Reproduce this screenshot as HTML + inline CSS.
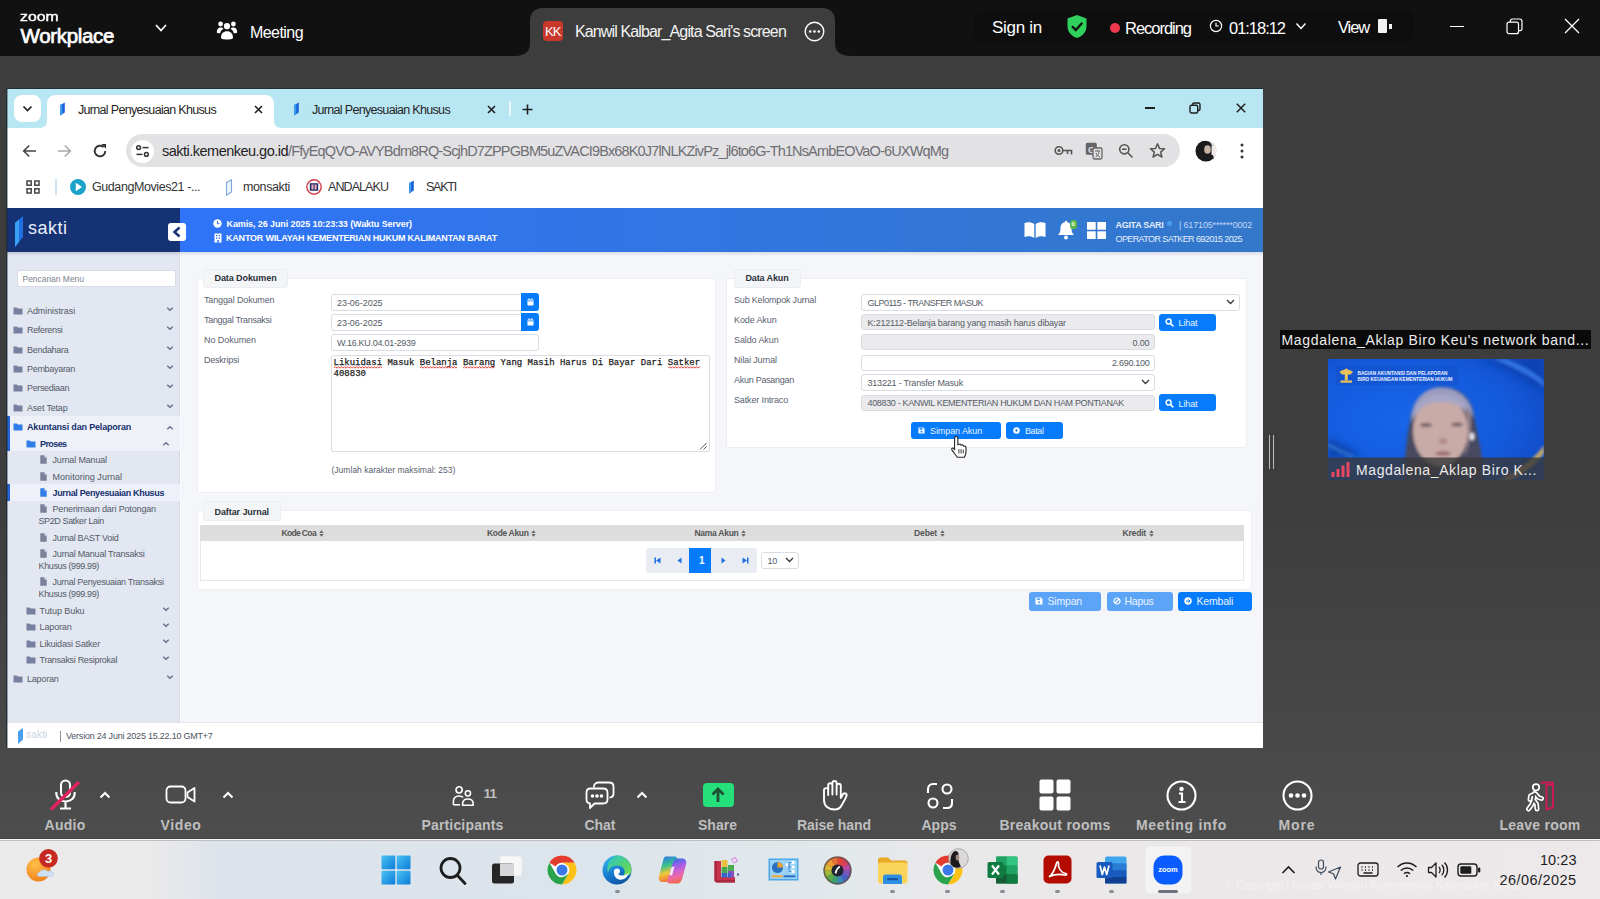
<!DOCTYPE html>
<html><head><meta charset="utf-8"><title>Zoom Meeting</title>
<style>
html,body{margin:0;padding:0;}
body{width:1600px;height:899px;overflow:hidden;position:relative;background:#3d3d3d;font-family:"Liberation Sans",sans-serif;}
.b{position:absolute;display:block;}
.t{position:absolute;white-space:nowrap;display:block;}
.m{font-family:"Liberation Mono",monospace;}
</style></head><body>
<div class="b" style="left:0;top:0;width:1600px;height:899px;background:linear-gradient(#3d3d3d 0,#3d3d3d 500px,#4d4d4d 838px,#4d4d4d 100%)"></div>
<div class="b" style="left:0px;top:0px;width:1600px;height:56px;background:#111111;"></div>
<div class="b" style="left:974px;top:11px;width:440px;height:31px;background:#0e0e0e;border-radius:9px;"></div>
<span class="t" style="left:20.0px;top:9.8px;font-size:12.5px;line-height:15px;color:#fff;-webkit-text-stroke:0.400px #fff;transform:scaleX(1.260);transform-origin:0 50%;">zoom</span>
<span class="t" style="left:20.5px;top:22.5px;font-size:20.5px;line-height:25px;color:#fff;letter-spacing:-0.33px;-webkit-text-stroke:0.700px #fff;">Workplace</span>
<svg class="b" style="left:154px;top:23px" width="14" height="10" viewBox="0 0 14 10"><path d="M2 2 L7 7.5 L12 2" fill="none" stroke="#fff" stroke-width="1.7"/></svg>
<svg class="b" style="left:216px;top:19px" width="22" height="22" viewBox="0 0 22 22" fill="#fff">
<circle cx="11" cy="7.2" r="3.1"/><circle cx="4.6" cy="5" r="2.4"/><circle cx="17.4" cy="5" r="2.4"/>
<path d="M5 18.5c0-4 2.3-6.3 6-6.3s6 2.3 6 6.3c0 1.2-1.5 2-6 2s-6-.8-6-2z"/>
<path d="M0.8 13.2c0-3 1.5-4.8 3.8-4.8 1.3 0 2.2.5 2.9 1.3-1.6.8-2.8 2.3-3.3 4.6-2.3-.1-3.4-.4-3.4-1.100z"/>
<path d="M21.200 13.200c0-3-1.500-4.800-3.800-4.800-1.300 0-2.200.5-2.900 1.300 1.600.8 2.800 2.300 3.300 4.600 2.300-.1 3.400-.4 3.400-1.100z"/></svg>
<span class="t" style="left:250.0px;top:22.5px;font-size:16px;line-height:19px;color:#fff;letter-spacing:-0.56px;">Meeting</span>
<svg class="b" style="left:512px;top:8px" width="342" height="48" viewBox="0 0 342 47" preserveAspectRatio="none"><path d="M0 47 C12 47 18 44 18 34 L18 12 C18 5 23 0 30 0 L311 0 C318 0 323 5 323 12 L323 34 C323 44 329 47 342 47 Z" fill="#3d3d3d"/></svg>
<div class="b" style="left:542.5px;top:21px;width:20px;height:20px;background:#c8382c;border-radius:4px;"></div>
<span class="t" style="left:545.0px;top:23.5px;font-size:13px;line-height:16px;color:#fff;letter-spacing:-0.92px;">KK</span>
<span class="t" style="left:575.0px;top:22.0px;font-size:16px;line-height:19px;color:#f2f2f2;letter-spacing:-0.87px;">Kanwil Kalbar_Agita Sari's screen</span>
<svg class="b" style="left:804px;top:21px" width="21" height="21" viewBox="0 0 21 21"><circle cx="10.500" cy="10.500" r="9.300" fill="none" stroke="#fff" stroke-width="1.400"/><circle cx="6.200" cy="10.500" r="1.300" fill="#fff"/><circle cx="10.500" cy="10.500" r="1.300" fill="#fff"/><circle cx="14.800" cy="10.500" r="1.300" fill="#fff"/></svg>
<span class="t" style="left:992.0px;top:18.0px;font-size:17px;line-height:20px;color:#fff;letter-spacing:-0.28px;">Sign in</span>
<svg class="b" style="left:1066px;top:14px" width="22" height="25" viewBox="0 0 22 25"><path d="M11 1 L20.500 4.500 V12 C20.500 18 16.500 22 11 24 C5.500 22 1.500 18 1.500 12 V4.500 Z" fill="#2fd05b"/><path d="M6 12.200 L9.800 16 L16.300 8.800" fill="none" stroke="#111111" stroke-width="2.300"/></svg>
<div class="b" style="left:1109.5px;top:22.5px;width:10px;height:10px;background:#f0384d;border-radius:50%;"></div>
<span class="t" style="left:1125.0px;top:18.0px;font-size:16.5px;line-height:20px;color:#fff;letter-spacing:-1.02px;">Recording</span>
<svg class="b" style="left:1209px;top:19px" width="14" height="14" viewBox="0 0 14 14"><circle cx="7" cy="7" r="5.600" fill="none" stroke="#fff" stroke-width="1.200"/><path d="M7 3.800 V7 H9.800" fill="none" stroke="#fff" stroke-width="1.200"/></svg>
<span class="t" style="left:1229.0px;top:18.0px;font-size:16.5px;line-height:20px;color:#fff;letter-spacing:-1.03px;">01:18:12</span>
<svg class="b" style="left:1295px;top:22px" width="12" height="9" viewBox="0 0 12 9"><path d="M1.500 1.500 L6 6.500 L10.500 1.500" fill="none" stroke="#fff" stroke-width="1.500"/></svg>
<span class="t" style="left:1338.0px;top:17.0px;font-size:16.5px;line-height:20px;color:#fff;letter-spacing:-1.12px;">View</span>
<div class="b" style="left:1378px;top:19px;width:9px;height:14px;background:#f2f2f2;border-radius:1px;"></div>
<div class="b" style="left:1388.5px;top:23.5px;width:3.5px;height:5px;background:#f2f2f2;"></div>
<div class="b" style="left:1450px;top:26px;width:14px;height:1.4px;background:#fff;"></div>
<svg class="b" style="left:1506px;top:18px" width="17" height="17" viewBox="0 0 17 17" fill="none" stroke="#fff" stroke-width="1.200"><rect x="1" y="4.200" width="11.500" height="11.500" rx="2"/><path d="M4.300 4 V3.200 C4.300 1.900 5.200 1 6.500 1 H13.500 C14.900 1 16 2.100 16 3.500 V10.500 C16 11.800 15.200 12.600 14 12.600 H13"/></svg>
<svg class="b" style="left:1564px;top:18px" width="16" height="16" viewBox="0 0 16 16"><path d="M1 1 L15 15 M15 1 L1 15" stroke="#fff" stroke-width="1.300"/></svg>
<div class="b" style="left:6px;top:88px;width:1257px;height:660px;background:rgba(30,44,50,0.850);"></div>
<div class="b" style="left:7px;top:89px;width:1256px;height:659px;background:#fff;"></div>
<div class="b" style="left:7px;top:89px;width:1256px;height:39px;background:#b9e6f3;"></div>
<div class="b" style="left:14px;top:95px;width:27px;height:27px;background:#fff;border-radius:8px;"></div>
<svg class="b" style="left:22px;top:105px" width="11" height="8" viewBox="0 0 11 8"><path d="M1.500 1.500 L5.500 5.500 L9.500 1.500" fill="none" stroke="#1f1f1f" stroke-width="1.700"/></svg>
<svg class="b" style="left:39px;top:95px" width="243" height="33" viewBox="0 0 243 33"><path d="M0 33 C6 33 8 30 8 25 L8 9 C8 3 12 0 17 0 L226 0 C231 0 235 3 235 9 L235 25 C235 30 237 33 243 33 Z" fill="#fff"/></svg>
<svg class="b" style="left:57.5px;top:102px" width="9" height="14" viewBox="0 0 9 14"><path d="M2.200 3 L6.800 0.500 L6.800 10.500 L2.200 13.500 Z" fill="#1d63d8"/><path d="M2.200 3 L4.200 2 L4.200 12.200 L2.200 13.500 Z" fill="#3b9bf0"/></svg>
<span class="t" style="left:78.0px;top:102.5px;font-size:12.5px;line-height:15px;color:#1f1f1f;letter-spacing:-0.68px;">Jurnal Penyesuaian Khusus</span>
<svg class="b" style="left:254px;top:104.500px" width="9" height="9" viewBox="0 0 9 9"><path d="M1 1 L8 8 M8 1 L1 8" stroke="#1f1f1f" stroke-width="1.600"/></svg>
<svg class="b" style="left:291.5px;top:102px" width="9" height="14" viewBox="0 0 9 14"><path d="M2.200 3 L6.800 0.500 L6.800 10.500 L2.200 13.500 Z" fill="#1d63d8"/><path d="M2.200 3 L4.200 2 L4.200 12.200 L2.200 13.500 Z" fill="#3b9bf0"/></svg>
<span class="t" style="left:312.0px;top:102.5px;font-size:12.5px;line-height:15px;color:#1f1f1f;letter-spacing:-0.68px;">Jurnal Penyesuaian Khusus</span>
<svg class="b" style="left:487px;top:104.500px" width="9" height="9" viewBox="0 0 9 9"><path d="M1 1 L8 8 M8 1 L1 8" stroke="#1f1f1f" stroke-width="1.600"/></svg>
<div class="b" style="left:509px;top:101px;width:2px;height:15px;background:#eef8fc;border-radius:1px;"></div>
<svg class="b" style="left:522px;top:103.500px" width="11" height="11" viewBox="0 0 11 11"><path d="M5.500 0.500 V10.500 M0.500 5.500 H10.500" stroke="#1f1f1f" stroke-width="1.600"/></svg>
<div class="b" style="left:1145px;top:107.3px;width:10px;height:1.4px;background:#1f1f1f;"></div>
<svg class="b" style="left:1189px;top:102px" width="12" height="12" viewBox="0 0 12 12" fill="none" stroke="#1f1f1f" stroke-width="1.400"><rect x="1" y="3.300" width="7.700" height="7.700" rx="1.500"/><path d="M3.500 3 V2.500 C3.500 1.600 4.100 1 5 1 H9.500 C10.400 1 11 1.600 11 2.500 V7 C11 7.900 10.400 8.500 9.500 8.500 H9"/></svg>
<svg class="b" style="left:1236px;top:103px" width="10" height="10" viewBox="0 0 10 10"><path d="M0.800 0.800 L9.200 9.200 M9.200 0.800 L0.800 9.200" stroke="#1f1f1f" stroke-width="1.500"/></svg>
<div class="b" style="left:7px;top:128px;width:1256px;height:80px;background:#fff;border-radius:7px 7px 0 0;"></div>
<svg class="b" style="left:22px;top:144px" width="15" height="14" viewBox="0 0 15 14"><path d="M14 7 H2 M7.200 1.500 L1.700 7 L7.200 12.500" fill="none" stroke="#444" stroke-width="1.600"/></svg>
<svg class="b" style="left:57px;top:144px" width="15" height="14" viewBox="0 0 15 14"><path d="M1 7 H13 M7.800 1.500 L13.300 7 L7.800 12.500" fill="none" stroke="#a9a9a9" stroke-width="1.600"/></svg>
<svg class="b" style="left:92px;top:143px" width="16" height="16" viewBox="0 0 16 16"><path d="M13.300 8 A5.300 5.300 0 1 1 11.600 4.100" fill="none" stroke="#333" stroke-width="1.900"/><path d="M9.300 1 H14 V5.700 Z" fill="#333"/></svg>
<div class="b" style="left:126px;top:134px;width:1054px;height:33px;background:#e2e1e4;border-radius:16.500px;"></div>
<div class="b" style="left:131px;top:139.5px;width:23px;height:23px;background:#fff;border-radius:50%;"></div>
<svg class="b" style="left:135px;top:144px" width="15" height="14" viewBox="0 0 15 14" fill="none" stroke="#333" stroke-width="1.500"><circle cx="3.600" cy="3.600" r="1.900"/><path d="M7.500 3.600 H13.500"/><circle cx="11.400" cy="10.400" r="1.900"/><path d="M1.500 10.400 H7.500"/></svg>
<span class="t" style="left:162.0px;top:142.5px;font-size:14.5px;line-height:17px;color:#1f1f1f;letter-spacing:-0.51px;">sakti.kemenkeu.go.id</span>
<span class="t" style="left:288.0px;top:142.5px;font-size:14.5px;line-height:17px;color:#6e6e73;letter-spacing:-0.85px;">/FfyEqQVO-AVYBdm8RQ-ScjhD7ZPPGBM5uZVACI9Bx68K0J7lNLKZivPz_jl6to6G-Th1NsAmbEOVaO-6UXWqMg</span>
<svg class="b" style="left:1054px;top:145px" width="19" height="12" viewBox="0 0 19 12" fill="none" stroke="#555" stroke-width="1.600"><circle cx="5" cy="5.500" r="3.800"/><circle cx="5" cy="5.500" r="0.800" fill="#555"/><path d="M8.800 5.500 H17.500 V9.500 M13.500 5.500 V9"/></svg>
<svg class="b" style="left:1085px;top:142px" width="18" height="18" viewBox="0 0 18 18"><rect x="0.800" y="0.800" width="11" height="12" rx="1.500" fill="#666"/><text x="3" y="10.500" font-family="Liberation Sans" font-size="9" font-weight="700" fill="#e2e1e4">G</text><rect x="8" y="6" width="9" height="11" rx="1.500" fill="#e2e1e4" stroke="#666" stroke-width="1.300"/><path d="M10 9 H15 M12.500 8 V9 M10.500 15 C13 13.500 14 11.500 14.200 9 M11 11 C11.800 13 13 14.200 15 15" stroke="#666" stroke-width="1" fill="none"/></svg>
<svg class="b" style="left:1118px;top:143px" width="16" height="16" viewBox="0 0 16 16" fill="none" stroke="#555" stroke-width="1.600"><circle cx="6.300" cy="6.300" r="4.600"/><path d="M9.800 9.800 L14.500 14.500 M4 6.300 H8.600"/></svg>
<svg class="b" style="left:1149px;top:142px" width="17" height="17" viewBox="0 0 17 17"><path d="M8.500 1.800 L10.500 6.400 L15.500 6.800 L11.700 10.100 L12.900 15 L8.500 12.400 L4.100 15 L5.300 10.100 L1.500 6.800 L6.500 6.400 Z" fill="none" stroke="#555" stroke-width="1.500" stroke-linejoin="round"/></svg>
<svg class="b" style="left:1195px;top:140px" width="22" height="22" viewBox="0 0 22 22"><defs><clipPath id="pc"><circle cx="11" cy="11" r="10.500"/></clipPath></defs><g clip-path="url(#pc)"><rect width="22" height="22" fill="#d8d4d0"/><path d="M0 22 V8 C1 2 6 0 11 1 C16 1 18 6 17 11 C17 15 19 19 22 22 Z" fill="#1b1b1d"/><ellipse cx="12.500" cy="9.500" rx="3.300" ry="4.300" fill="#c9b4a8"/><rect x="16.500" y="6" width="5.500" height="9" fill="#efeceb"/></g></svg>
<svg class="b" style="left:1239px;top:142px" width="6" height="18" viewBox="0 0 6 18" fill="#333"><circle cx="3" cy="3" r="1.500"/><circle cx="3" cy="9" r="1.500"/><circle cx="3" cy="15" r="1.500"/></svg>
<svg class="b" style="left:26px;top:180px" width="14" height="14" viewBox="0 0 14 14" fill="none" stroke="#444" stroke-width="1.500"><rect x="1" y="1" width="4.200" height="4.200"/><rect x="8.800" y="1" width="4.200" height="4.200"/><rect x="1" y="8.800" width="4.200" height="4.200"/><rect x="8.800" y="8.800" width="4.200" height="4.200"/></svg>
<div class="b" style="left:55px;top:179px;width:1.5px;height:16px;background:#cfe6f0;"></div>
<svg class="b" style="left:70px;top:179px" width="16" height="16" viewBox="0 0 16 16"><circle cx="8" cy="8" r="8" fill="#1ba3c9"/><path d="M5.800 3.800 L12 8 L5.800 12.200 Z" fill="#fff"/></svg>
<span class="t" style="left:92.0px;top:179.5px;font-size:12.5px;line-height:15px;color:#333;letter-spacing:-0.42px;">GudangMovies21 -...</span>
<svg class="b" style="left:225px;top:178.500px" width="8" height="17" viewBox="0 0 8 17"><path d="M1.500 3.500 L6.500 0.800 L6.500 13 L1.500 16.200 Z" fill="#eef5fc" stroke="#7ea6dc" stroke-width="1.100"/></svg>
<span class="t" style="left:243.0px;top:179.5px;font-size:12.5px;line-height:15px;color:#333;letter-spacing:-0.38px;">monsakti</span>
<svg class="b" style="left:306px;top:179px" width="16" height="16" viewBox="0 0 16 16"><circle cx="8" cy="8" r="7.200" fill="#fff" stroke="#d23a4a" stroke-width="1.400"/><rect x="3.800" y="4.200" width="8.400" height="7.600" fill="#2a2f6b"/><rect x="5.500" y="5.500" width="2" height="5" fill="#e9b3b8"/><rect x="8.600" y="5.500" width="2" height="5" fill="#e9b3b8"/></svg>
<span class="t" style="left:328.0px;top:179.5px;font-size:12.5px;line-height:15px;color:#333;letter-spacing:-0.92px;">ANDALAKU</span>
<svg class="b" style="left:407px;top:180px" width="9" height="14" viewBox="0 0 9 14"><path d="M2.200 3 L6.800 0.500 L6.800 10.500 L2.200 13.500 Z" fill="#1d63d8"/><path d="M2.200 3 L4.200 2 L4.200 12.200 L2.200 13.500 Z" fill="#3b9bf0"/></svg>
<span class="t" style="left:426.0px;top:179.5px;font-size:12.5px;line-height:15px;color:#333;letter-spacing:-1.22px;">SAKTI</span>
<div class="b" style="left:7px;top:208px;width:1256px;height:44px;background:linear-gradient(90deg,#2f74f8 13.700%,#3378c9 100%);"></div>
<div class="b" style="left:7px;top:208px;width:173px;height:44px;background:#143274;"></div>
<svg class="b" style="left:13px;top:215px" width="12" height="33" viewBox="0 0 12 33"><path d="M2 8 L10 1 L10 22 L2 32 Z" fill="#1f6fe0"/><path d="M2 8 L6 4.500 L6 27 L2 32 Z" fill="#39a0f5"/></svg>
<span class="t" style="left:28.0px;top:217.0px;font-size:18px;line-height:22px;color:#e9eefb;letter-spacing:0.50px;">sakti</span>
<div class="b" style="left:168px;top:223px;width:18px;height:18px;background:#fff;border-radius:3px;"></div>
<svg class="b" style="left:172px;top:226px" width="10" height="12" viewBox="0 0 10 12"><path d="M7.500 1.500 L2.500 6 L7.500 10.500" fill="none" stroke="#142f74" stroke-width="2.400"/></svg>
<svg class="b" style="left:213px;top:219px" width="9" height="9" viewBox="0 0 9 9"><circle cx="4.500" cy="4.500" r="4.200" fill="#fff"/><path d="M4.500 2 V4.700 H6.500" stroke="#2c71e2" stroke-width="1" fill="none"/></svg>
<span class="t" style="left:226.5px;top:218.5px;font-size:9px;line-height:11px;color:#fff;font-weight:700;letter-spacing:-0.10px;">Kamis, 26 Juni 2025 10:23:33 (Waktu Server)</span>
<svg class="b" style="left:213.500px;top:233px" width="8" height="10" viewBox="0 0 8 10"><rect x="0.500" y="0.500" width="7" height="9" fill="#fff"/><rect x="2" y="2" width="1.300" height="1.300" fill="#2c71e2"/><rect x="4.700" y="2" width="1.300" height="1.300" fill="#2c71e2"/><rect x="2" y="4.500" width="1.300" height="1.300" fill="#2c71e2"/><rect x="4.700" y="4.500" width="1.300" height="1.300" fill="#2c71e2"/><rect x="3.200" y="7" width="1.600" height="2.500" fill="#2c71e2"/></svg>
<span class="t" style="left:226.0px;top:233.0px;font-size:9px;line-height:11px;color:#fff;font-weight:700;letter-spacing:-0.20px;">KANTOR WILAYAH KEMENTERIAN HUKUM KALIMANTAN BARAT</span>
<svg class="b" style="left:1024px;top:221px" width="22" height="18" viewBox="0 0 22 18"><path d="M0.500 2 C4 0.500 7.500 1 10.300 3 V17 C7.500 15 4 14.500 0.500 16 Z M21.500 2 C18 0.500 14.500 1 11.700 3 V17 C14.500 15 18 14.500 21.500 16 Z" fill="#fff"/></svg>
<svg class="b" style="left:1057px;top:220px" width="18" height="21" viewBox="0 0 18 21"><path d="M9 2 C5 2 3.500 5 3.500 8.500 C3.500 12 2.500 13.500 1 15 H17 C15.500 13.500 14.500 12 14.500 8.500 C14.500 5 13 2 9 2 Z" fill="#fff"/><circle cx="9" cy="17.500" r="2" fill="#fff"/><circle cx="9" cy="2" r="1.200" fill="#fff"/></svg>
<div class="b" style="left:1069.5px;top:220px;width:7px;height:9px;background:#58b947;border-radius:3px;"></div>
<span class="t" style="left:1071.5px;top:221.0px;font-size:6px;line-height:7px;color:#fff;font-weight:700;">0</span>
<svg class="b" style="left:1087px;top:222px" width="19" height="17" viewBox="0 0 19 17" fill="#fff"><rect x="0" y="0" width="8.700" height="7.700"/><rect x="10.300" y="0" width="8.700" height="7.700"/><rect x="0" y="9.300" width="8.700" height="7.700"/><rect x="10.300" y="9.300" width="8.700" height="7.700"/></svg>
<span class="t" style="left:1115.5px;top:219.5px;font-size:9px;line-height:11px;color:#e3edfd;font-weight:700;letter-spacing:-0.30px;">AGITA SARI</span>
<div class="b" style="left:1167px;top:221px;width:5px;height:5px;background:#4a9cf5;border-radius:50%;"></div>
<span class="t" style="left:1179.0px;top:219.5px;font-size:9px;line-height:11px;color:#c3d6f7;letter-spacing:-0.16px;">| 617105******0002</span>
<span class="t" style="left:1115.5px;top:234.0px;font-size:9px;line-height:11px;color:#e3edfd;letter-spacing:-0.60px;">OPERATOR SATKER 692015 2025</span>
<div class="b" style="left:180px;top:252px;width:1083px;height:470px;background:#f5f6f9;"></div>
<div class="b" style="left:180px;top:252px;width:1083px;height:4px;background:linear-gradient(#d6dbe6,#f5f6f9);"></div>
<div class="b" style="left:7px;top:252px;width:173px;height:470px;background:#e2e7f1;"></div>
<div class="b" style="left:7px;top:252px;width:173px;height:4px;background:linear-gradient(#c2c8d8,#e2e7f1);"></div>
<div class="b" style="left:179px;top:252px;width:1px;height:470px;background:#d5d8de;"></div>
<div class="b" style="left:180px;top:256px;width:1px;height:466px;background:#f9fbfe;"></div>
<div class="b" style="left:17.3px;top:269.5px;width:158.4px;height:17.8px;background:#fff;border:1px solid #d8dce6;border-radius:2px;box-sizing:border-box;"></div>
<span class="t" style="left:22.5px;top:274.3px;font-size:8.5px;line-height:10px;color:#7d828d;letter-spacing:-0.03px;">Pencarian Menu</span>
<svg class="b" style="left:13px;top:307.2px" width="10" height="8" viewBox="0 0 10 8"><path d="M0.500 0.500 H3.800 L4.800 1.600 H9.500 V7.500 H0.500 Z" fill="#7880a0"/></svg>
<span class="t" style="left:27.0px;top:306.2px;font-size:9px;line-height:11px;color:#545a68;letter-spacing:-0.08px;">Administrasi</span>
<svg class="b" style="left:165.5px;top:305.9px" width="8" height="6" viewBox="0 0 8 6"><path d="M1.200 1.700 L4 4.300 L6.800 1.700" fill="none" stroke="#6b728c" stroke-width="1.500"/></svg>
<svg class="b" style="left:13px;top:326.4px" width="10" height="8" viewBox="0 0 10 8"><path d="M0.500 0.500 H3.800 L4.800 1.600 H9.500 V7.500 H0.500 Z" fill="#7880a0"/></svg>
<span class="t" style="left:27.0px;top:325.4px;font-size:9px;line-height:11px;color:#545a68;letter-spacing:-0.34px;">Referensi</span>
<svg class="b" style="left:165.5px;top:325.1px" width="8" height="6" viewBox="0 0 8 6"><path d="M1.200 1.700 L4 4.300 L6.800 1.700" fill="none" stroke="#6b728c" stroke-width="1.500"/></svg>
<svg class="b" style="left:13px;top:345.9px" width="10" height="8" viewBox="0 0 10 8"><path d="M0.500 0.500 H3.800 L4.800 1.600 H9.500 V7.500 H0.500 Z" fill="#7880a0"/></svg>
<span class="t" style="left:27.0px;top:344.9px;font-size:9px;line-height:11px;color:#545a68;letter-spacing:-0.28px;">Bendahara</span>
<svg class="b" style="left:165.5px;top:344.6px" width="8" height="6" viewBox="0 0 8 6"><path d="M1.200 1.700 L4 4.300 L6.800 1.700" fill="none" stroke="#6b728c" stroke-width="1.500"/></svg>
<svg class="b" style="left:13px;top:365.4px" width="10" height="8" viewBox="0 0 10 8"><path d="M0.500 0.500 H3.800 L4.800 1.600 H9.500 V7.500 H0.500 Z" fill="#7880a0"/></svg>
<span class="t" style="left:27.0px;top:364.4px;font-size:9px;line-height:11px;color:#545a68;letter-spacing:-0.30px;">Pembayaran</span>
<svg class="b" style="left:165.5px;top:364.1px" width="8" height="6" viewBox="0 0 8 6"><path d="M1.200 1.700 L4 4.300 L6.800 1.700" fill="none" stroke="#6b728c" stroke-width="1.500"/></svg>
<svg class="b" style="left:13px;top:384.4px" width="10" height="8" viewBox="0 0 10 8"><path d="M0.500 0.500 H3.800 L4.800 1.600 H9.500 V7.500 H0.500 Z" fill="#7880a0"/></svg>
<span class="t" style="left:27.0px;top:383.4px;font-size:9px;line-height:11px;color:#545a68;letter-spacing:-0.35px;">Persediaan</span>
<svg class="b" style="left:165.5px;top:383.1px" width="8" height="6" viewBox="0 0 8 6"><path d="M1.200 1.700 L4 4.300 L6.800 1.700" fill="none" stroke="#6b728c" stroke-width="1.500"/></svg>
<svg class="b" style="left:13px;top:403.9px" width="10" height="8" viewBox="0 0 10 8"><path d="M0.500 0.500 H3.800 L4.800 1.600 H9.500 V7.500 H0.500 Z" fill="#7880a0"/></svg>
<span class="t" style="left:27.0px;top:402.9px;font-size:9px;line-height:11px;color:#545a68;letter-spacing:-0.19px;">Aset Tetap</span>
<svg class="b" style="left:165.5px;top:402.6px" width="8" height="6" viewBox="0 0 8 6"><path d="M1.200 1.700 L4 4.300 L6.800 1.700" fill="none" stroke="#6b728c" stroke-width="1.500"/></svg>
<div class="b" style="left:7px;top:415.5px;width:173px;height:35px;background:#eef1f8;"></div>
<div class="b" style="left:7px;top:415.5px;width:2.5px;height:35px;background:#2563d6;"></div>
<svg class="b" style="left:13px;top:422.8px" width="10" height="8" viewBox="0 0 10 8"><path d="M0.500 0.500 H3.800 L4.800 1.600 H9.500 V7.500 H0.500 Z" fill="#2f7de6"/></svg>
<span class="t" style="left:27.0px;top:422.2px;font-size:9px;line-height:11px;color:#16306e;font-weight:700;letter-spacing:-0.17px;">Akuntansi dan Pelaporan</span>
<svg class="b" style="left:165.5px;top:424.8px" width="8" height="6" viewBox="0 0 8 6"><path d="M1.200 4.300 L4 1.700 L6.800 4.300" fill="none" stroke="#6b728c" stroke-width="1.500"/></svg>
<svg class="b" style="left:26px;top:439.8px" width="10" height="8" viewBox="0 0 10 8"><path d="M0.500 0.500 H3.800 L4.800 1.600 H9.500 V7.500 H0.500 Z" fill="#2f7de6"/></svg>
<span class="t" style="left:40.0px;top:438.9px;font-size:9px;line-height:11px;color:#16306e;font-weight:700;letter-spacing:-0.59px;">Proses</span>
<svg class="b" style="left:162px;top:441.3px" width="8" height="6" viewBox="0 0 8 6"><path d="M1.200 4.300 L4 1.700 L6.800 4.300" fill="none" stroke="#6b728c" stroke-width="1.500"/></svg>
<svg class="b" style="left:39.8px;top:455.4px" width="7" height="9" viewBox="0 0 7 9"><path d="M0.300 0.300 H4.300 L6.700 2.700 V8.700 H0.300 Z" fill="#7a8198"/><path d="M4.300 0.300 V2.700 H6.700" fill="#c9cede"/></svg>
<span class="t" style="left:52.5px;top:455.2px;font-size:9px;line-height:11px;color:#545a68;letter-spacing:-0.16px;">Jurnal Manual</span>
<svg class="b" style="left:39.8px;top:471.9px" width="7" height="9" viewBox="0 0 7 9"><path d="M0.300 0.300 H4.300 L6.700 2.700 V8.700 H0.300 Z" fill="#7a8198"/><path d="M4.300 0.300 V2.700 H6.700" fill="#c9cede"/></svg>
<span class="t" style="left:52.5px;top:471.7px;font-size:9px;line-height:11px;color:#545a68;letter-spacing:0.03px;">Monitoring Jurnal</span>
<div class="b" style="left:7px;top:484px;width:173px;height:16.5px;background:#eef1f8;"></div>
<div class="b" style="left:7px;top:484px;width:2.5px;height:16.5px;background:#2563d6;"></div>
<svg class="b" style="left:39.8px;top:488.4px" width="7" height="9" viewBox="0 0 7 9"><path d="M0.300 0.300 H4.300 L6.700 2.700 V8.700 H0.300 Z" fill="#2f7de6"/><path d="M4.300 0.300 V2.700 H6.700" fill="#c9cede"/></svg>
<span class="t" style="left:52.5px;top:488.2px;font-size:9px;line-height:11px;color:#16306e;font-weight:700;letter-spacing:-0.34px;">Jurnal Penyesuaian Khusus</span>
<svg class="b" style="left:39.8px;top:504.4px" width="7" height="9" viewBox="0 0 7 9"><path d="M0.300 0.300 H4.300 L6.700 2.700 V8.700 H0.300 Z" fill="#7a8198"/><path d="M4.300 0.300 V2.700 H6.700" fill="#c9cede"/></svg>
<span class="t" style="left:52.5px;top:504.4px;font-size:9px;line-height:11px;color:#545a68;letter-spacing:-0.15px;">Penerimaan dari Potongan</span>
<span class="t" style="left:38.5px;top:516.4px;font-size:9px;line-height:11px;color:#545a68;letter-spacing:-0.38px;">SP2D Satker Lain</span>
<svg class="b" style="left:39.8px;top:532.9px" width="7" height="9" viewBox="0 0 7 9"><path d="M0.300 0.300 H4.300 L6.700 2.700 V8.700 H0.300 Z" fill="#7a8198"/><path d="M4.300 0.300 V2.700 H6.700" fill="#c9cede"/></svg>
<span class="t" style="left:52.5px;top:532.7px;font-size:9px;line-height:11px;color:#545a68;letter-spacing:-0.27px;">Jurnal BAST Void</span>
<svg class="b" style="left:39.8px;top:549.4px" width="7" height="9" viewBox="0 0 7 9"><path d="M0.300 0.300 H4.300 L6.700 2.700 V8.700 H0.300 Z" fill="#7a8198"/><path d="M4.300 0.300 V2.700 H6.700" fill="#c9cede"/></svg>
<span class="t" style="left:52.5px;top:549.0px;font-size:9px;line-height:11px;color:#545a68;letter-spacing:-0.24px;">Jurnal Manual Transaksi</span>
<span class="t" style="left:38.5px;top:561.2px;font-size:9px;line-height:11px;color:#545a68;letter-spacing:-0.37px;">Khusus (999.99)</span>
<svg class="b" style="left:39.8px;top:577.4px" width="7" height="9" viewBox="0 0 7 9"><path d="M0.300 0.300 H4.300 L6.700 2.700 V8.700 H0.300 Z" fill="#7a8198"/><path d="M4.300 0.300 V2.700 H6.700" fill="#c9cede"/></svg>
<span class="t" style="left:52.5px;top:577.2px;font-size:9px;line-height:11px;color:#545a68;letter-spacing:-0.32px;">Jurnal Penyesuaian Transaksi</span>
<span class="t" style="left:38.5px;top:589.4px;font-size:9px;line-height:11px;color:#545a68;letter-spacing:-0.37px;">Khusus (999.99)</span>
<svg class="b" style="left:26px;top:606.8px" width="10" height="8" viewBox="0 0 10 8"><path d="M0.500 0.500 H3.800 L4.800 1.600 H9.500 V7.500 H0.500 Z" fill="#7880a0"/></svg>
<span class="t" style="left:39.6px;top:605.8px;font-size:9px;line-height:11px;color:#545a68;letter-spacing:-0.08px;">Tutup Buku</span>
<svg class="b" style="left:162px;top:605.6px" width="8" height="6" viewBox="0 0 8 6"><path d="M1.200 1.700 L4 4.300 L6.800 1.700" fill="none" stroke="#6b728c" stroke-width="1.500"/></svg>
<svg class="b" style="left:26px;top:623.2px" width="10" height="8" viewBox="0 0 10 8"><path d="M0.500 0.500 H3.800 L4.800 1.600 H9.500 V7.500 H0.500 Z" fill="#7880a0"/></svg>
<span class="t" style="left:39.6px;top:622.2px;font-size:9px;line-height:11px;color:#545a68;letter-spacing:-0.16px;">Laporan</span>
<svg class="b" style="left:162px;top:622px" width="8" height="6" viewBox="0 0 8 6"><path d="M1.200 1.700 L4 4.300 L6.800 1.700" fill="none" stroke="#6b728c" stroke-width="1.500"/></svg>
<svg class="b" style="left:26px;top:639.6px" width="10" height="8" viewBox="0 0 10 8"><path d="M0.500 0.500 H3.800 L4.800 1.600 H9.500 V7.500 H0.500 Z" fill="#7880a0"/></svg>
<span class="t" style="left:39.6px;top:638.6px;font-size:9px;line-height:11px;color:#545a68;letter-spacing:-0.20px;">Likuidasi Satker</span>
<svg class="b" style="left:162px;top:638.4px" width="8" height="6" viewBox="0 0 8 6"><path d="M1.200 1.700 L4 4.300 L6.800 1.700" fill="none" stroke="#6b728c" stroke-width="1.500"/></svg>
<svg class="b" style="left:26px;top:655.7px" width="10" height="8" viewBox="0 0 10 8"><path d="M0.500 0.500 H3.800 L4.800 1.600 H9.500 V7.500 H0.500 Z" fill="#7880a0"/></svg>
<span class="t" style="left:39.6px;top:654.7px;font-size:9px;line-height:11px;color:#545a68;letter-spacing:-0.31px;">Transaksi Resiprokal</span>
<svg class="b" style="left:162px;top:654.5px" width="8" height="6" viewBox="0 0 8 6"><path d="M1.200 1.700 L4 4.300 L6.800 1.700" fill="none" stroke="#6b728c" stroke-width="1.500"/></svg>
<svg class="b" style="left:13px;top:675.3px" width="10" height="8" viewBox="0 0 10 8"><path d="M0.500 0.500 H3.800 L4.800 1.600 H9.500 V7.500 H0.500 Z" fill="#7880a0"/></svg>
<span class="t" style="left:27.0px;top:674.4px;font-size:9px;line-height:11px;color:#545a68;letter-spacing:-0.22px;">Laporan</span>
<svg class="b" style="left:165.5px;top:674.1px" width="8" height="6" viewBox="0 0 8 6"><path d="M1.200 1.700 L4 4.300 L6.800 1.700" fill="none" stroke="#6b728c" stroke-width="1.500"/></svg>
<div class="b" style="left:7px;top:722px;width:1256px;height:26px;background:#fff;border-top:1px solid #e3e5ea;box-sizing:border-box;"></div>
<svg class="b" style="left:17px;top:727px" width="7" height="18" viewBox="0 0 7 17"><path d="M1 4 L6 0.500 L6 12 L1 16.500 Z" fill="#4a9fee"/></svg>
<span class="t" style="left:26.0px;top:728.5px;font-size:10px;line-height:12px;color:#c9d3e6;letter-spacing:0.19px;">sakti</span>
<div class="b" style="left:60px;top:731px;width:1px;height:11px;background:#8a8f9a;"></div>
<span class="t" style="left:66.0px;top:731.0px;font-size:9px;line-height:11px;color:#4d5361;letter-spacing:-0.22px;">Version 24 Juni 2025 15.22.10 GMT+7</span>
<div class="b" style="left:197px;top:277.8px;width:519px;height:215.5px;background:#fff;border:1px solid #eceef2;border-radius:3px;box-sizing:border-box;"></div>
<div class="b" style="left:202.5px;top:269px;width:85.5px;height:19.2px;background:#f4f5f7;border:1px solid #ebedf1;border-radius:3px;box-sizing:border-box;"></div>
<span class="t" style="left:214.5px;top:273.4px;font-size:9px;line-height:11px;color:#2b2f38;font-weight:700;letter-spacing:-0.08px;">Data Dokumen</span>
<span class="t" style="left:204.0px;top:294.5px;font-size:9px;line-height:11px;color:#5a6170;letter-spacing:-0.14px;">Tanggal Dokumen</span>
<span class="t" style="left:204.0px;top:314.5px;font-size:9px;line-height:11px;color:#5a6170;letter-spacing:-0.30px;">Tanggal Transaksi</span>
<span class="t" style="left:204.0px;top:334.8px;font-size:9px;line-height:11px;color:#5a6170;letter-spacing:-0.05px;">No Dokumen</span>
<span class="t" style="left:204.0px;top:355.0px;font-size:9px;line-height:11px;color:#5a6170;letter-spacing:-0.22px;">Deskripsi</span>
<div class="b" style="left:331px;top:293.5px;width:192px;height:17px;background:#fff;border:1px solid #d9dce3;border-radius:3px;box-sizing:border-box;"></div>
<span class="t" style="left:337.0px;top:297.9px;font-size:9px;line-height:11px;color:#555b66;letter-spacing:-0.05px;">23-06-2025</span>
<div class="b" style="left:521px;top:293px;width:18px;height:17.8px;background:#067bfb;border-radius:0 3px 3px 0;"></div>
<svg class="b" style="left:526.5px;top:298px" width="7" height="8" viewBox="0 0 8 9"><rect x="0.500" y="1.500" width="7" height="7" rx="0.800" fill="#fff"/><rect x="1.800" y="0.300" width="1.200" height="2" fill="#fff"/><rect x="5" y="0.300" width="1.200" height="2" fill="#fff"/><rect x="0.500" y="2.800" width="7" height="0.900" fill="#067bfb"/></svg>
<div class="b" style="left:331px;top:313.5px;width:192px;height:17px;background:#fff;border:1px solid #d9dce3;border-radius:3px;box-sizing:border-box;"></div>
<span class="t" style="left:337.0px;top:317.9px;font-size:9px;line-height:11px;color:#555b66;letter-spacing:-0.05px;">23-06-2025</span>
<div class="b" style="left:521px;top:313px;width:18px;height:17.8px;background:#067bfb;border-radius:0 3px 3px 0;"></div>
<svg class="b" style="left:526.5px;top:318px" width="7" height="8" viewBox="0 0 8 9"><rect x="0.500" y="1.500" width="7" height="7" rx="0.800" fill="#fff"/><rect x="1.800" y="0.300" width="1.200" height="2" fill="#fff"/><rect x="5" y="0.300" width="1.200" height="2" fill="#fff"/><rect x="0.500" y="2.800" width="7" height="0.900" fill="#067bfb"/></svg>
<div class="b" style="left:331px;top:334px;width:208px;height:16.5px;background:#fff;border:1px solid #d9dce3;border-radius:3px;box-sizing:border-box;"></div>
<span class="t" style="left:337.0px;top:337.9px;font-size:9px;line-height:11px;color:#555b66;letter-spacing:-0.28px;">W.16.KU.04.01-2939</span>
<div class="b" style="left:331px;top:354.5px;width:378.5px;height:97px;background:#fff;border:1px solid #d9dce3;border-radius:2px;box-sizing:border-box;"></div>
<span class="t m" style="left:333.5px;top:357.7px;font-size:9px;line-height:11px;color:#1c1c1c;letter-spacing:-0.01px;-webkit-text-stroke:0.250px #1c1c1c;">Likuidasi Masuk Belanja Barang Yang Masih Harus Di Bayar Dari Satker</span>
<span class="t m" style="left:333.5px;top:369.2px;font-size:9px;line-height:11px;color:#1c1c1c;letter-spacing:0.02px;-webkit-text-stroke:0.250px #1c1c1c;">408830</span>
<svg class="b" style="left:334px;top:366.400px" width="48" height="3" viewBox="0 0 48 3"><path d="M0 2.200 L1.5 0.6 L3 2.2 L4.5 0.6 L6 2.2 L7.5 0.6 L9 2.2 L10.5 0.6 L12 2.2 L13.5 0.6 L15 2.2 L16.5 0.6 L18 2.2 L19.5 0.6 L21 2.2 L22.5 0.6 L24 2.2 L25.5 0.6 L27 2.2 L28.5 0.6 L30 2.2 L31.5 0.6 L33 2.2 L34.5 0.6 L36 2.2 L37.5 0.6 L39 2.2 L40.5 0.6 L42 2.2 L43.5 0.6 L45 2.2 L46.5 0.6 L48 2.2" fill="none" stroke="#e2483d" stroke-width="1"/></svg>
<svg class="b" style="left:420px;top:366.400px" width="37" height="3" viewBox="0 0 37 3"><path d="M0 2.200 L1.5 0.6 L3 2.2 L4.5 0.6 L6 2.2 L7.5 0.6 L9 2.2 L10.5 0.6 L12 2.2 L13.5 0.6 L15 2.2 L16.5 0.6 L18 2.2 L19.5 0.6 L21 2.2 L22.5 0.6 L24 2.2 L25.5 0.6 L27 2.2 L28.5 0.6 L30 2.2 L31.5 0.6 L33 2.2 L34.5 0.6 L36 2.2 L37.5 0.6" fill="none" stroke="#e2483d" stroke-width="1"/></svg>
<svg class="b" style="left:463px;top:366.400px" width="32" height="3" viewBox="0 0 32 3"><path d="M0 2.200 L1.5 0.6 L3 2.2 L4.5 0.6 L6 2.2 L7.5 0.6 L9 2.2 L10.5 0.6 L12 2.2 L13.5 0.6 L15 2.2 L16.5 0.6 L18 2.2 L19.5 0.6 L21 2.2 L22.5 0.6 L24 2.2 L25.5 0.6 L27 2.2 L28.5 0.6 L30 2.2 L31.5 0.6 L33 2.2" fill="none" stroke="#e2483d" stroke-width="1"/></svg>
<svg class="b" style="left:668px;top:366.400px" width="32" height="3" viewBox="0 0 32 3"><path d="M0 2.200 L1.5 0.6 L3 2.2 L4.5 0.6 L6 2.2 L7.5 0.6 L9 2.2 L10.5 0.6 L12 2.2 L13.5 0.6 L15 2.2 L16.5 0.6 L18 2.2 L19.5 0.6 L21 2.2 L22.5 0.6 L24 2.2 L25.5 0.6 L27 2.2 L28.5 0.6 L30 2.2 L31.5 0.6 L33 2.2" fill="none" stroke="#e2483d" stroke-width="1"/></svg>
<svg class="b" style="left:699px;top:442px" width="8" height="8" viewBox="0 0 8 8"><path d="M7.500 1 L1 7.500 M7.500 4.500 L4.500 7.500" stroke="#555" stroke-width="1"/></svg>
<span class="t" style="left:331.5px;top:465.0px;font-size:8.5px;line-height:10px;color:#5a6170;letter-spacing:0.02px;">(Jumlah karakter maksimal: 253)</span>
<div class="b" style="left:726px;top:277.8px;width:521px;height:170.2px;background:#fff;border:1px solid #eceef2;border-radius:3px;box-sizing:border-box;"></div>
<div class="b" style="left:733.5px;top:269px;width:67px;height:19.2px;background:#f4f5f7;border:1px solid #ebedf1;border-radius:3px;box-sizing:border-box;"></div>
<span class="t" style="left:745.5px;top:273.4px;font-size:9px;line-height:11px;color:#2b2f38;font-weight:700;letter-spacing:-0.13px;">Data Akun</span>
<span class="t" style="left:734.0px;top:294.5px;font-size:9px;line-height:11px;color:#5a6170;letter-spacing:-0.19px;">Sub Kelompok Jurnal</span>
<span class="t" style="left:734.0px;top:314.5px;font-size:9px;line-height:11px;color:#5a6170;letter-spacing:-0.11px;">Kode Akun</span>
<span class="t" style="left:734.0px;top:334.8px;font-size:9px;line-height:11px;color:#5a6170;letter-spacing:-0.10px;">Saldo Akun</span>
<span class="t" style="left:734.0px;top:355.0px;font-size:9px;line-height:11px;color:#5a6170;letter-spacing:-0.13px;">Nilai Jurnal</span>
<span class="t" style="left:734.0px;top:374.8px;font-size:9px;line-height:11px;color:#5a6170;letter-spacing:-0.27px;">Akun Pasangan</span>
<span class="t" style="left:734.0px;top:395.0px;font-size:9px;line-height:11px;color:#5a6170;letter-spacing:-0.14px;">Satker Intraco</span>
<div class="b" style="left:861px;top:293.5px;width:379px;height:17px;background:#fff;border:1px solid #d9dce3;border-radius:3px;box-sizing:border-box;"></div>
<span class="t" style="left:867.5px;top:297.9px;font-size:9px;line-height:11px;color:#555b66;letter-spacing:-0.53px;">GLP0115 - TRANSFER MASUK</span>
<svg class="b" style="left:1225.5px;top:298.5px" width="9" height="6" viewBox="0 0 9 6"><path d="M1 1 L4.500 4.500 L8 1" fill="none" stroke="#333" stroke-width="1.300"/></svg>
<div class="b" style="left:861px;top:313.8px;width:294px;height:16.7px;background:#ebebed;border:1px solid #d9dce3;border-radius:3px;box-sizing:border-box;"></div>
<span class="t" style="left:867.5px;top:317.9px;font-size:9px;line-height:11px;color:#555b66;letter-spacing:-0.18px;">K:212112-Belanja barang yang masih harus dibayar</span>
<div class="b" style="left:1159px;top:313.5px;width:57px;height:17.3px;background:#067bfb;border-radius:3px;"></div>
<svg class="b" style="left:1165px;top:317.5px" width="9" height="9" viewBox="0 0 9 9"><circle cx="3.600" cy="3.600" r="2.500" fill="none" stroke="#fff" stroke-width="1.500"/><path d="M5.500 5.500 L8.300 8.300" stroke="#fff" stroke-width="1.700"/></svg>
<span class="t" style="left:1178.5px;top:318.0px;font-size:9px;line-height:11px;color:#e8f2ff;letter-spacing:-0.10px;">Lihat</span>
<div class="b" style="left:861px;top:333.8px;width:294px;height:16.7px;background:#ebebed;border:1px solid #d9dce3;border-radius:3px;box-sizing:border-box;"></div>
<span class="t" style="left:1132.5px;top:338.2px;font-size:9px;line-height:11px;color:#555b66;letter-spacing:-0.13px;">0.00</span>
<div class="b" style="left:861px;top:354.5px;width:294px;height:16px;background:#fff;border:1px solid #d9dce3;border-radius:3px;box-sizing:border-box;"></div>
<span class="t" style="left:1112.0px;top:358.4px;font-size:9px;line-height:11px;color:#555b66;letter-spacing:-0.28px;">2.690.100</span>
<div class="b" style="left:861px;top:374px;width:294px;height:16.8px;background:#fff;border:1px solid #d9dce3;border-radius:3px;box-sizing:border-box;"></div>
<span class="t" style="left:867.5px;top:378.4px;font-size:9px;line-height:11px;color:#555b66;letter-spacing:-0.20px;">313221 - Transfer Masuk</span>
<svg class="b" style="left:1140.5px;top:378.5px" width="9" height="6" viewBox="0 0 9 6"><path d="M1 1 L4.500 4.500 L8 1" fill="none" stroke="#333" stroke-width="1.300"/></svg>
<div class="b" style="left:861px;top:394.5px;width:294px;height:16.5px;background:#ebebed;border:1px solid #d9dce3;border-radius:3px;box-sizing:border-box;"></div>
<span class="t" style="left:867.5px;top:398.4px;font-size:9px;line-height:11px;color:#555b66;letter-spacing:-0.34px;">408830 - KANWIL KEMENTERIAN HUKUM DAN HAM PONTIANAK</span>
<div class="b" style="left:1159px;top:394px;width:57px;height:17.3px;background:#067bfb;border-radius:3px;"></div>
<svg class="b" style="left:1165px;top:398.5px" width="9" height="9" viewBox="0 0 9 9"><circle cx="3.600" cy="3.600" r="2.500" fill="none" stroke="#fff" stroke-width="1.500"/><path d="M5.500 5.500 L8.300 8.300" stroke="#fff" stroke-width="1.700"/></svg>
<span class="t" style="left:1178.5px;top:398.8px;font-size:9px;line-height:11px;color:#e8f2ff;letter-spacing:-0.10px;">Lihat</span>
<div class="b" style="left:911px;top:421.5px;width:90px;height:17.3px;background:#067bfb;border-radius:3px;"></div>
<svg class="b" style="left:917.500px;top:426.500px" width="7" height="7" viewBox="0 0 8 8"><path d="M0.500 0.500 H6 L7.500 2 V7.500 H0.500 Z" fill="#fff"/><rect x="1.800" y="1.300" width="3.400" height="1.700" fill="#067bfb"/><circle cx="4" cy="5.300" r="1.100" fill="#067bfb"/></svg>
<span class="t" style="left:930.0px;top:426.1px;font-size:9px;line-height:11px;color:#e8f2ff;letter-spacing:-0.09px;">Simpan Akun</span>
<div class="b" style="left:1006px;top:421.5px;width:57px;height:17.3px;background:#067bfb;border-radius:3px;"></div>
<svg class="b" style="left:1012.500px;top:426.500px" width="7" height="7" viewBox="0 0 8 8"><circle cx="4" cy="4" r="3.700" fill="#fff"/><circle cx="4" cy="4" r="1.300" fill="#067bfb"/></svg>
<span class="t" style="left:1025.0px;top:426.1px;font-size:9px;line-height:11px;color:#e8f2ff;letter-spacing:-0.40px;">Batal</span>
<svg class="b" style="left:948.500px;top:434.500px" width="22" height="25" viewBox="0 0 20 23"><path d="M6 1.500 C7 1 8 1.500 8 3 V9 L9.200 8.500 C10 8.200 10.800 8.600 11 9.300 C12 8.800 13 9.200 13.300 10.200 C14.500 9.800 15.500 10.500 15.500 11.800 V15.500 C15.500 18 14.500 19 14 20.500 H7.500 C6 18 4 16 2.500 13.500 C2 12.500 3 11.500 4 12.200 L5 13.300 V3 C5 2.200 5.400 1.700 6 1.500 Z" fill="#fff" stroke="#222" stroke-width="1"/><path d="M9 13 V17 M11 13 V17 M13 13.500 V17" stroke="#222" stroke-width="0.800"/></svg>
<div class="b" style="left:196.5px;top:510.2px;width:1055px;height:79.8px;background:#fff;border:1px solid #eceef2;border-radius:3px;box-sizing:border-box;"></div>
<div class="b" style="left:203px;top:501px;width:77.5px;height:19.5px;background:#f4f5f7;border:1px solid #ebedf1;border-radius:3px;box-sizing:border-box;"></div>
<span class="t" style="left:214.5px;top:507.2px;font-size:9px;line-height:11px;color:#2b2f38;font-weight:700;letter-spacing:-0.08px;">Daftar Jurnal</span>
<div class="b" style="left:200px;top:525px;width:1043.5px;height:56px;background:#fff;border:1px solid #e6e8ec;box-sizing:border-box;"></div>
<div class="b" style="left:200px;top:525px;width:1043.5px;height:15.5px;background:#dddddd;"></div>
<span class="t" style="left:281.5px;top:527.8px;font-size:8.5px;line-height:10px;color:#555;font-weight:700;letter-spacing:-0.65px;">Kode Coa</span>
<svg class="b" style="left:318.5px;top:529.5px" width="5" height="7" viewBox="0 0 5 7" fill="#666"><path d="M0.300 3 L2.500 0.300 L4.700 3 Z M0.300 4 L2.500 6.700 L4.700 4 Z"/></svg>
<span class="t" style="left:487.0px;top:527.8px;font-size:8.5px;line-height:10px;color:#555;font-weight:700;letter-spacing:-0.34px;">Kode Akun</span>
<svg class="b" style="left:531px;top:529.5px" width="5" height="7" viewBox="0 0 5 7" fill="#666"><path d="M0.300 3 L2.500 0.300 L4.700 3 Z M0.300 4 L2.500 6.700 L4.700 4 Z"/></svg>
<span class="t" style="left:694.5px;top:527.8px;font-size:8.5px;line-height:10px;color:#555;font-weight:700;letter-spacing:-0.27px;">Nama Akun</span>
<svg class="b" style="left:741px;top:529.5px" width="5" height="7" viewBox="0 0 5 7" fill="#666"><path d="M0.300 3 L2.500 0.300 L4.700 3 Z M0.300 4 L2.500 6.700 L4.700 4 Z"/></svg>
<span class="t" style="left:914.0px;top:527.8px;font-size:8.5px;line-height:10px;color:#555;font-weight:700;letter-spacing:-0.12px;">Debet</span>
<svg class="b" style="left:939.5px;top:529.5px" width="5" height="7" viewBox="0 0 5 7" fill="#666"><path d="M0.300 3 L2.500 0.300 L4.700 3 Z M0.300 4 L2.500 6.700 L4.700 4 Z"/></svg>
<span class="t" style="left:1122.5px;top:527.8px;font-size:8.5px;line-height:10px;color:#555;font-weight:700;letter-spacing:-0.18px;">Kredit</span>
<svg class="b" style="left:1148.5px;top:529.5px" width="5" height="7" viewBox="0 0 5 7" fill="#666"><path d="M0.300 3 L2.500 0.300 L4.700 3 Z M0.300 4 L2.500 6.700 L4.700 4 Z"/></svg>
<div class="b" style="left:645.5px;top:548px;width:111.5px;height:24.8px;background:#e9ecf3;border-radius:3px;"></div>
<div class="b" style="left:688.5px;top:548px;width:22px;height:24.8px;background:#067bfb;"></div>
<span class="t" style="left:699.0px;top:554.5px;font-size:10px;line-height:12px;color:#fff;font-weight:700;">1</span>
<svg class="b" style="left:654px;top:556.500px" width="7" height="7" viewBox="0 0 7 7" fill="#1f6fe0"><rect x="0.500" y="0.500" width="1.500" height="6"/><path d="M6.500 0.500 V6.500 L2 3.500 Z"/></svg>
<svg class="b" style="left:676.500px;top:556.500px" width="5" height="7" viewBox="0 0 5 7" fill="#1f6fe0"><path d="M4.500 0.500 V6.500 L0.500 3.500 Z"/></svg>
<svg class="b" style="left:720.500px;top:556.500px" width="5" height="7" viewBox="0 0 5 7" fill="#1f6fe0"><path d="M0.500 0.500 V6.500 L4.500 3.500 Z"/></svg>
<svg class="b" style="left:741.500px;top:556.500px" width="7" height="7" viewBox="0 0 7 7" fill="#1f6fe0"><rect x="5" y="0.500" width="1.500" height="6"/><path d="M0.500 0.500 V6.500 L5 3.500 Z"/></svg>
<div class="b" style="left:761px;top:552px;width:38px;height:17px;background:#fff;border:1px solid #d9dce3;border-radius:3px;box-sizing:border-box;"></div>
<span class="t" style="left:767.5px;top:555.8px;font-size:9px;line-height:11px;color:#555b66;letter-spacing:-0.25px;">10</span>
<svg class="b" style="left:785px;top:556.5px" width="9" height="6" viewBox="0 0 9 6"><path d="M1 1 L4.500 4.500 L8 1" fill="none" stroke="#333" stroke-width="1.300"/></svg>
<div class="b" style="left:1029px;top:591.5px;width:72px;height:19.3px;background:#5ca4f8;border-radius:3px;"></div>
<svg class="b" style="left:1035px;top:596.500px" width="8" height="8" viewBox="0 0 8 8"><path d="M0.500 0.500 H6 L7.500 2 V7.500 H0.500 Z" fill="#fff"/><rect x="1.800" y="1.300" width="3.400" height="1.700" fill="#5ca4f8"/><circle cx="4" cy="5.300" r="1.100" fill="#5ca4f8"/></svg>
<span class="t" style="left:1047.5px;top:595.3px;font-size:10.5px;line-height:13px;color:#eaf3ff;letter-spacing:-0.18px;">Simpan</span>
<div class="b" style="left:1106.5px;top:591.5px;width:66.5px;height:19.3px;background:#5ca4f8;border-radius:3px;"></div>
<svg class="b" style="left:1112.500px;top:596.500px" width="8" height="8" viewBox="0 0 8 8"><circle cx="4" cy="4" r="3" fill="none" stroke="#fff" stroke-width="1.200"/><path d="M2 6 L6 2" stroke="#fff" stroke-width="1.200"/></svg>
<span class="t" style="left:1124.5px;top:595.3px;font-size:10.5px;line-height:13px;color:#eaf3ff;letter-spacing:-0.27px;">Hapus</span>
<div class="b" style="left:1177.5px;top:591.5px;width:74.5px;height:19.3px;background:#067bfb;border-radius:3px;"></div>
<svg class="b" style="left:1183.500px;top:596.500px" width="8" height="8" viewBox="0 0 8 8"><circle cx="4" cy="4" r="3.700" fill="#fff"/><path d="M2 4 H6 M4.300 2.300 L6 4 L4.300 5.700" stroke="#067bfb" stroke-width="1" fill="none"/></svg>
<span class="t" style="left:1196.5px;top:595.3px;font-size:10.5px;line-height:13px;color:#eaf3ff;letter-spacing:-0.20px;">Kembali</span>
<div class="b" style="left:7px;top:89px;width:1px;height:659px;background:rgba(30,44,50,0.400)"></div>
<svg class="b" style="left:48px;top:777px" width="34" height="36" viewBox="0 0 34 36" fill="none" stroke="#fff" stroke-width="2.100"><rect x="13" y="3.500" width="9" height="16.500" rx="4.500"/><path d="M8.300 15 V16 C8.300 21.500 12.500 24.500 17.500 24.500 C22.500 24.500 26.700 21.500 26.700 16 V15 M17.500 24.500 V31.500 M12 31.500 H23"/><path d="M3 32.500 L31 5" stroke="#e0245e" stroke-width="3.400"/></svg>
<span class="t" style="left:44.5px;top:816.5px;font-size:14px;line-height:17px;color:#bfbfbf;font-weight:700;letter-spacing:0.27px;">Audio</span>
<svg class="b" style="left:98.5px;top:791px" width="12" height="8" viewBox="0 0 12 8"><path d="M1.500 6.500 L6 2 L10.500 6.500" fill="none" stroke="#fff" stroke-width="2.100"/></svg>
<svg class="b" style="left:165px;top:784px" width="32" height="22" viewBox="0 0 32 22" fill="none" stroke="#fff" stroke-width="1.800"><rect x="1.500" y="2.500" width="19" height="16" rx="4"/><path d="M22.500 8.500 L29.500 4 V17.500 L22.500 13 Z" stroke-linejoin="round"/></svg>
<span class="t" style="left:160.5px;top:816.5px;font-size:14px;line-height:17px;color:#bfbfbf;font-weight:700;letter-spacing:0.63px;">Video</span>
<svg class="b" style="left:221.5px;top:791px" width="12" height="8" viewBox="0 0 12 8"><path d="M1.500 6.500 L6 2 L10.500 6.500" fill="none" stroke="#fff" stroke-width="2.100"/></svg>
<svg class="b" style="left:451.500px;top:784.500px" width="23" height="22" viewBox="0 0 26 25" fill="none" stroke="#fff" stroke-width="1.800"><circle cx="8" cy="5.500" r="3.500"/><path d="M1.500 22.500 V19 C1.500 15 4 12.500 8 12.500 C10 12.500 11.500 13 12.500 14"/><path d="M1.500 22.500 H9"/><circle cx="18" cy="9.500" r="3"/><path d="M12 23 V21.500 C12 18 14 16 18 16 C22 16 24 18 24 21.500 V23 Z" stroke-linejoin="round"/></svg>
<span class="t" style="left:483.5px;top:786.2px;font-size:13.5px;line-height:16px;color:#bfbfbf;font-weight:700;letter-spacing:-0.74px;">11</span>
<span class="t" style="left:421.5px;top:816.5px;font-size:14px;line-height:17px;color:#bfbfbf;font-weight:700;letter-spacing:0.16px;">Participants</span>
<svg class="b" style="left:585px;top:781px" width="30" height="29" viewBox="0 0 30 29" fill="none" stroke="#fff" stroke-width="1.800"><path d="M9 6.500 V5.500 C9 3 11 1.500 13.500 1.500 H24 C26.500 1.500 28.500 3 28.500 5.500 V12.500 C28.500 15 27 16.500 24.500 16.500"/><path d="M5.500 7.500 H18 C20.500 7.500 22.500 9 22.500 11.500 V18.500 C22.500 21 20.500 22.500 18 22.500 H9.500 L5 27 V22.500 C2.800 22.200 1.500 20.800 1.500 18.500 V11.500 C1.500 9 3 7.500 5.500 7.500 Z" stroke-linejoin="round"/><circle cx="7.500" cy="15" r="0.900" fill="#fff"/><circle cx="12" cy="15" r="0.900" fill="#fff"/><circle cx="16.500" cy="15" r="0.900" fill="#fff"/></svg>
<span class="t" style="left:584.5px;top:816.5px;font-size:14px;line-height:17px;color:#bfbfbf;font-weight:700;letter-spacing:-0.03px;">Chat</span>
<svg class="b" style="left:636px;top:791px" width="12" height="8" viewBox="0 0 12 8"><path d="M1.500 6.500 L6 2 L10.500 6.500" fill="none" stroke="#fff" stroke-width="2.100"/></svg>
<div class="b" style="left:702.5px;top:783px;width:31px;height:23.5px;background:#25df7a;border-radius:4px;"></div>
<svg class="b" style="left:710px;top:786px" width="16" height="18" viewBox="0 0 16 18"><path d="M8 16 V4 M2.500 8.500 L8 3 L13.500 8.500" fill="none" stroke="#1f4f35" stroke-width="2.800"/></svg>
<span class="t" style="left:698.0px;top:816.5px;font-size:14px;line-height:17px;color:#bfbfbf;font-weight:700;letter-spacing:0.02px;">Share</span>
<svg class="b" style="left:822px;top:779px" width="26" height="32" viewBox="0 0 26 32" fill="none" stroke="#fff" stroke-width="1.900" stroke-linejoin="round" stroke-linecap="round"><path d="M2 21 V11.200 A2.100 2.100 0 0 1 6.200 11.200 V16 V6.300 A2.100 2.100 0 0 1 10.400 6.300 V15.500 V4.100 A2.100 2.100 0 0 1 14.600 4.100 V15.500 V6.900 A2.100 2.100 0 0 1 18.800 6.900 V19 L21.300 14.800 A2 2 0 0 1 24.500 17 C23 21 21 24 19.500 26.500 C18 29.500 15.500 30.500 12.500 30.500 C6.500 30.500 2 27 2 21 Z"/></svg>
<span class="t" style="left:797.0px;top:816.5px;font-size:14px;line-height:17px;color:#bfbfbf;font-weight:700;letter-spacing:-0.07px;">Raise hand</span>
<svg class="b" style="left:925.500px;top:781.500px" width="28" height="28" viewBox="0 0 28 28" fill="none" stroke="#fff" stroke-width="2.100"><path d="M2 11 V7 C2 4 4 2 7 2 H11"/><circle cx="21" cy="7" r="4.500"/><circle cx="7" cy="21" r="4.500"/><path d="M26 17 V21 C26 24 24 26 21 26 H17"/></svg>
<span class="t" style="left:921.5px;top:816.5px;font-size:14px;line-height:17px;color:#bfbfbf;font-weight:700;">Apps</span>
<svg class="b" style="left:1039px;top:779px" width="32" height="32" viewBox="0 0 32 32" fill="#fff"><rect x="0.500" y="0.500" width="14" height="14" rx="2"/><rect x="17.500" y="0.500" width="14" height="14" rx="2"/><rect x="0.500" y="17.500" width="14" height="14" rx="2"/><rect x="17.500" y="17.500" width="14" height="14" rx="2"/></svg>
<span class="t" style="left:999.5px;top:816.5px;font-size:14px;line-height:17px;color:#bfbfbf;font-weight:700;letter-spacing:0.26px;">Breakout rooms</span>
<svg class="b" style="left:1166px;top:780px" width="31" height="31" viewBox="0 0 31 31" fill="none" stroke="#fff" stroke-width="2.100"><circle cx="15.500" cy="15.500" r="14"/><circle cx="15.500" cy="9" r="1.200" fill="#fff"/><path d="M13 13.500 H16 V22 M12.500 22 H19.500"/></svg>
<span class="t" style="left:1136.0px;top:816.5px;font-size:14px;line-height:17px;color:#bfbfbf;font-weight:700;letter-spacing:0.71px;">Meeting info</span>
<svg class="b" style="left:1282px;top:780px" width="31" height="31" viewBox="0 0 31 31" fill="none" stroke="#fff" stroke-width="2.100"><circle cx="15.500" cy="15.500" r="14"/><circle cx="9" cy="15.500" r="1.300" fill="#fff"/><circle cx="15.500" cy="15.500" r="1.300" fill="#fff"/><circle cx="22" cy="15.500" r="1.300" fill="#fff"/></svg>
<span class="t" style="left:1278.5px;top:816.5px;font-size:14px;line-height:17px;color:#bfbfbf;font-weight:700;letter-spacing:0.89px;">More</span>
<svg class="b" style="left:1524px;top:779.500px" width="32" height="32" viewBox="0 0 32 32" fill="none"><path d="M16.500 2.500 H29 V27.500 L22.500 29.500 V5 H28" stroke="#cf1a55" stroke-width="1.900"/><g stroke="#fff" stroke-linecap="round" stroke-linejoin="round"><path d="M10.500 13.500 L9.500 20 L12.500 24 L13 29 M9.500 20.500 L7.500 25 L4.500 29 M10.500 14 L6.500 16 L6 19.500 M11.500 14 L14.500 17.500 L17.500 18.500" stroke-width="5"/></g><g stroke="#4b4b4b" stroke-linecap="round" stroke-linejoin="round"><path d="M10.500 13.500 L9.500 20 L12.500 24 L13 29 M9.500 20.500 L7.500 25 L4.500 29 M10.500 14 L6.500 16 L6 19.500 M11.500 14 L14.500 17.500 L17.500 18.500" stroke-width="1.700"/></g><circle cx="12" cy="7.300" r="3.200" stroke="#fff" stroke-width="1.700" fill="#4b4b4b"/></svg>
<span class="t" style="left:1499.5px;top:816.5px;font-size:14px;line-height:17px;color:#bfbfbf;font-weight:700;letter-spacing:0.24px;">Leave room</span>
<div class="b" style="left:1280px;top:330px;width:311px;height:19px;background:#0a0a0a;"></div>
<span class="t" style="left:1281.5px;top:331.5px;font-size:14px;line-height:17px;color:#ededed;letter-spacing:0.69px;">Magdalena_Aklap Biro Keu's network band...</span>
<svg class="b" style="left:1328px;top:359px" width="216" height="121" viewBox="0 0 216 121">
<defs><radialGradient id="vb" cx="0.350" cy="0.500" r="0.800"><stop offset="0" stop-color="#1765ea"/><stop offset="0.600" stop-color="#145adc"/><stop offset="1" stop-color="#0f47c0"/></radialGradient>
<filter id="bl" x="-20%" y="-20%" width="140%" height="140%"><feGaussianBlur stdDeviation="1.500"/></filter>
<filter id="bl2" x="-20%" y="-20%" width="140%" height="140%"><feGaussianBlur stdDeviation="3"/></filter></defs>
<rect width="216" height="121" fill="url(#vb)"/>
<path d="M150 0 H216 V34 C200 22 175 8 150 0 Z" fill="#0e3fae" opacity="0.750" filter="url(#bl2)"/>
<path d="M165 0 C185 8 205 18 216 28 V22 C206 12 190 4 178 0 Z" fill="#3f86f2" opacity="0.700" filter="url(#bl)"/>
<path d="M0 78 L34 96 L0 100 Z" fill="#0c3c9e" opacity="0.700" filter="url(#bl2)"/>
<path d="M0 84 L26 97 L24 99 L0 88 Z" fill="#3d8ad8" opacity="0.600" filter="url(#bl)"/>
<path d="M170 121 C190 112 207 100 216 86 V94 C207 107 192 117 182 121 Z" fill="#c9ab62" filter="url(#bl)"/>
<g filter="url(#bl)">
<path d="M76 121 C76 100 79 80 82 62 C84 40 98 28 113 28 C130 28 144 38 146 56 C149 75 156 100 156 121 Z" fill="#474a60"/>
<path d="M83 64 C83 40 97 28.500 113 28.500 C130 28.500 145 40 145.500 60 C140 46 130 40 113 40 C97 40 88 50 83 64 Z" fill="#9a9cc0"/>
<ellipse cx="112.500" cy="72" rx="27.500" ry="35" fill="#c8aba6"/>
<path d="M85 60 C88 42 100 35 113 35 C127 35 139 42 141 58 C134 46 126 43 113 43 C100 43 92 48 85 60 Z" fill="#a8a6c6"/>
<ellipse cx="98" cy="66" rx="6" ry="2" fill="#74606a"/><ellipse cx="129" cy="65.500" rx="6" ry="2" fill="#74606a"/>
<ellipse cx="115" cy="82" rx="4.500" ry="3" fill="#b08c8c"/>
<ellipse cx="115" cy="94.500" rx="8" ry="2.200" fill="#9a6a72"/>
<path d="M137 50 C141 60 142 80 136 98 C141 90 144 70 142 54 Z" fill="#a58a90"/>
<ellipse cx="144" cy="77.500" rx="2" ry="3.800" fill="#f4f4f8"/>
</g>
<rect x="8" y="7" width="122" height="19" fill="#0d3aa0" opacity="0.200"/>
<g fill="#e8c35a"><path d="M11.500 13 C14 9.500 22 9.500 25 13 L22.500 15.500 H14 Z"/><rect x="16.800" y="12" width="3" height="9.500"/><rect x="12.500" y="21.500" width="11.500" height="2.200"/><circle cx="18.300" cy="11" r="1.600"/></g>
<text x="29.500" y="15.600" font-family="Liberation Sans" font-weight="700" font-size="4.600" fill="#eef3ff" textLength="90" lengthAdjust="spacingAndGlyphs">BAGIAN AKUNTANSI DAN PELAPORAN</text>
<text x="29.500" y="22.300" font-family="Liberation Sans" font-weight="700" font-size="4.600" fill="#eef3ff" textLength="95" lengthAdjust="spacingAndGlyphs">BIRO KEUANGAN KEMENTERIAN HUKUM</text>
<rect x="0" y="98.500" width="216" height="22.500" fill="#38383a" opacity="0.800"/>
<g fill="#e8475f"><rect x="3.500" y="113" width="3" height="5"/><rect x="8.500" y="110" width="3" height="8"/><rect x="13.500" y="106.500" width="3" height="11.500"/><rect x="18.500" y="103" width="3" height="15"/></g>
</svg>
<span class="t" style="left:1356.0px;top:461.5px;font-size:14px;line-height:17px;color:#ececec;letter-spacing:0.61px;">Magdalena_Aklap Biro K...</span>
<div class="b" style="left:1268.5px;top:435px;width:1.5px;height:33.5px;background:#bdbdbd;"></div>
<div class="b" style="left:1272.5px;top:435px;width:1.5px;height:33.5px;background:#bdbdbd;"></div>
<div class="b" style="left:0px;top:838px;width:1600px;height:1px;background:#424242;"></div>
<div class="b" style="left:0px;top:839px;width:1600px;height:1px;background:#fbf9fa;"></div>
<div class="b" style="left:0px;top:840px;width:1600px;height:1px;background:#bfbdbe;"></div>
<div class="b" style="left:0px;top:841px;width:1600px;height:58px;background:linear-gradient(90deg,#ebeaeb 0,#ebeaeb 9.400%,#dce3eb 14%,#dde5ec 38%,#e0e8eb 50.500%,#e8e8ea 58%,#eae8e9 65%,#ece8e9 77.500%,#ede8ea 100%);"></div>
<svg class="b" style="left:22px;top:846px" width="40" height="40" viewBox="0 0 40 40"><defs><radialGradient id="sun" cx="0.350" cy="0.300" r="0.800"><stop offset="0" stop-color="#ffc04a"/><stop offset="1" stop-color="#ee7a14"/></radialGradient></defs><circle cx="16.500" cy="23.500" r="12" fill="url(#sun)"/><path d="M17.500 30.500 C14.500 30.500 14.500 26.500 17.500 26.300 C18.500 23.500 23.500 23 25.500 25.300 C29 24.300 31.500 26 31.500 28 C31.500 29.800 30 30.500 28.500 30.500 Z" fill="#cfdff5" stroke="#a9c0e2" stroke-width="0.500"/><circle cx="26.500" cy="12.300" r="9.300" fill="#c62822"/><text x="26.500" y="17" text-anchor="middle" font-family="Liberation Sans" font-size="13" font-weight="700" fill="#fff">3</text></svg>
<svg class="b" style="left:381px;top:855px" width="30" height="30" viewBox="0 0 30 30"><defs><linearGradient id="wl" x1="0" y1="0" x2="1" y2="1"><stop offset="0" stop-color="#4cc2f5"/><stop offset="1" stop-color="#0d7bd8"/></linearGradient></defs><g fill="url(#wl)"><rect x="0.500" y="0.500" width="13.800" height="13.800" rx="1"/><rect x="15.700" y="0.500" width="13.800" height="13.800" rx="1"/><rect x="0.500" y="15.700" width="13.800" height="13.800" rx="1"/><rect x="15.700" y="15.700" width="13.800" height="13.800" rx="1"/></g></svg>
<svg class="b" style="left:438px;top:856px" width="30" height="30" viewBox="0 0 30 30" fill="none" stroke="#1d1d1d" stroke-width="2.800"><circle cx="12.500" cy="12" r="9.500"/><path d="M19.500 19.500 L27 27.500" stroke-linecap="round"/></svg>
<svg class="b" style="left:491px;top:855px" width="32" height="30" viewBox="0 0 32 30"><rect x="9" y="1" width="22" height="20" rx="2.500" fill="#f7f7f8" stroke="#e1e1e4" stroke-width="0.600"/><rect x="1" y="8.500" width="22" height="20" rx="2.500" fill="#262626"/><rect x="9" y="8.500" width="14" height="12.500" fill="#d6d6d8"/></svg>
<svg class="b" style="left:547px;top:855px" width="30" height="30" viewBox="0 0 30 30"><circle cx="15" cy="15" r="14.500" fill="#fff"/><path d="M15 0.500 A14.500 14.500 0 0 1 27.560 7.750 L15 7.750 A7.250 7.250 0 0 0 8.720 11.380 L2.440 7.750 A14.500 14.500 0 0 1 15 0.500 Z" fill="#e33b2e"/><path d="M27.560 7.750 A14.500 14.500 0 0 1 15 29.500 L21.280 18.630 A7.250 7.250 0 0 0 21.280 11.380 L15 7.750 Z" fill="#fbc116"/><path d="M15 29.500 A14.500 14.500 0 0 1 2.440 7.750 L8.720 18.630 A7.250 7.250 0 0 0 15 22.250 L21.280 18.630 Z" fill="#2ba24c"/><circle cx="15" cy="15" r="6.800" fill="#fff"/><circle cx="15" cy="15" r="5.500" fill="#3b78e7"/></svg>
<svg class="b" style="left:602px;top:855px" width="30" height="30" viewBox="0 0 30 30"><defs><linearGradient id="eg" x1="0.200" y1="0" x2="0.700" y2="1"><stop offset="0" stop-color="#38b6ea"/><stop offset="0.500" stop-color="#1880d4"/><stop offset="1" stop-color="#0c4f9e"/></linearGradient><linearGradient id="eg2" x1="0" y1="0" x2="1" y2="1"><stop offset="0" stop-color="#2cc3d0"/><stop offset="0.600" stop-color="#54d36c"/><stop offset="1" stop-color="#7bdc55"/></linearGradient></defs><circle cx="15" cy="15" r="14.500" fill="url(#eg)"/><path d="M14 0.600 A14.500 14.500 0 0 1 29.400 16 C29 20 25 21.500 21.500 20.300 C24.500 16.500 22 10.500 15 10.500 C10 10.500 6.500 14 6 18 C4 11 7 3.500 14 0.600 Z" fill="url(#eg2)"/><path d="M12 15.800 C12.500 12.800 17.500 12.800 18 15.800 C18.300 17.600 17 18.600 16 19.200 C19 21.200 24 20.600 26.800 17.800 C25.500 23 21 25.500 17 24.500 C13 23.500 11.300 19.500 12 15.800 Z" fill="#f4f9fd"/></svg>
<div class="b" style="left:614.5px;top:890px;width:5px;height:3px;background:#8a8d93;border-radius:1.500px;"></div>
<svg class="b" style="left:657px;top:855px" width="31" height="30" viewBox="0 0 31 30"><defs><linearGradient id="cp1" x1="0.300" y1="0" x2="0.500" y2="1"><stop offset="0" stop-color="#2e7ee6"/><stop offset="0.350" stop-color="#35c08a"/><stop offset="0.650" stop-color="#f0c838"/><stop offset="1" stop-color="#f2683e"/></linearGradient><linearGradient id="cp2" x1="0.400" y1="0" x2="0.600" y2="1"><stop offset="0" stop-color="#3a6ee6"/><stop offset="0.350" stop-color="#b05ce6"/><stop offset="0.700" stop-color="#ee6aa8"/><stop offset="1" stop-color="#f2683e"/></linearGradient></defs><path d="M9 1.500 H17 C20 1.500 21 3.500 20 6.500 L15.500 22 C14.500 25.500 12.500 27 9.500 27 H6 C2.500 27 1 24.500 2 21 L5.500 8 C6.500 4 7 1.500 9 1.500 Z" fill="url(#cp1)"/><path d="M21.500 3.500 H25 C28.500 3.500 30 6 29 9.500 L25.500 22.500 C24.500 26.500 23 28.500 20 28.500 H13 C10.500 28.500 10 27 11 24 L15.500 8.500 C16.500 5 18.500 3.500 21.500 3.500 Z" fill="url(#cp2)"/><path d="M14.500 12 L17.500 11.500 L15 20.500 L12.300 20 Z" fill="#fff" opacity="0.850"/></svg>
<svg class="b" style="left:713px;top:856px" width="29" height="29" viewBox="0 0 29 29"><path d="M1.500 5 H8 V21 H22 V26.500 H4 C2.500 26.500 1.500 25.500 1.500 24 Z" fill="#c8324a"/><path d="M1.500 5 H4 V24 H22 V26.500 H4 C2.500 26.500 1.500 25.500 1.500 24 Z" fill="#a82840"/><rect x="8.500" y="4" width="6" height="7" fill="#e8c040"/><rect x="8.500" y="11" width="6" height="6" fill="#4aa850"/><rect x="8.500" y="17" width="6" height="4.500" fill="#3a62c8"/><rect x="15" y="9" width="6" height="6" fill="#4aa850"/><rect x="15" y="15" width="6" height="6.500" fill="#8a50c0"/><rect x="15" y="17" width="3" height="4.500" fill="#3a62c8"/><path d="M18 3.500 L22 1 L25 5 L21 7.500 Z" fill="#d070d8"/><path d="M19 3.800 L21.800 2 L23.800 4.800 L21 6.500 Z" fill="#f2e2f6"/><rect x="24" y="17.500" width="2" height="2" fill="#4a5a90"/></svg>
<svg class="b" style="left:767.500px;top:858px" width="31" height="23" viewBox="0 0 31 23"><rect x="0.500" y="0.500" width="30" height="22" fill="#4aa8ea"/><rect x="2" y="2" width="27" height="19" fill="#9ad2f6"/><circle cx="9.500" cy="9.500" r="5.500" fill="#2a70c0"/><path d="M9.500 9.500 V4 A5.500 5.500 0 0 1 15 9.500 Z" fill="#f2a030"/><path d="M17 7 H21 M21 4.500 V13.500 M21 4.500 H24 M21 9 H24 M21 13.500 H24" stroke="#2a70c0" stroke-width="0.700" fill="none"/><rect x="17.500" y="5.500" width="2.600" height="2.600" fill="#fff"/><rect x="23.500" y="3" width="3" height="3" fill="#fff"/><rect x="23.500" y="7.500" width="3" height="3" fill="#fff"/><rect x="23.500" y="12" width="3" height="3" fill="#fff"/><rect x="3.500" y="17.300" width="11" height="2" fill="#f0a838"/><rect x="15.500" y="17.300" width="12" height="2" fill="#2a70c0"/></svg>
<svg class="b" style="left:823px;top:856px" width="29" height="29" viewBox="0 0 29 29"><circle cx="14.500" cy="14.500" r="14" fill="#6a5a58"/><path d="M14.5 14.5 L14.50 1.30 A13.2 13.2 0 0 1 21.10 3.07 Z" fill="#e8453a"/><path d="M14.5 14.5 L21.10 3.07 A13.2 13.2 0 0 1 25.93 7.90 Z" fill="#d8405c"/><path d="M14.5 14.5 L25.93 7.90 A13.2 13.2 0 0 1 27.70 14.50 Z" fill="#b84aa8"/><path d="M14.5 14.5 L27.70 14.50 A13.2 13.2 0 0 1 25.93 21.10 Z" fill="#7a55c0"/><path d="M14.5 14.5 L25.93 21.10 A13.2 13.2 0 0 1 21.10 25.93 Z" fill="#4a62c8"/><path d="M14.5 14.5 L21.10 25.93 A13.2 13.2 0 0 1 14.50 27.70 Z" fill="#3a8ab8"/><path d="M14.5 14.5 L14.50 27.70 A13.2 13.2 0 0 1 7.90 25.93 Z" fill="#3aa070"/><path d="M14.5 14.5 L7.90 25.93 A13.2 13.2 0 0 1 3.07 21.10 Z" fill="#58a848"/><path d="M14.5 14.5 L3.07 21.10 A13.2 13.2 0 0 1 1.30 14.50 Z" fill="#a0b838"/><path d="M14.5 14.5 L1.30 14.50 A13.2 13.2 0 0 1 3.07 7.90 Z" fill="#d8b830"/><path d="M14.5 14.5 L3.07 7.90 A13.2 13.2 0 0 1 7.90 3.07 Z" fill="#eca030"/><path d="M14.5 14.5 L7.90 3.07 A13.2 13.2 0 0 1 14.50 1.30 Z" fill="#e87030"/><circle cx="14.500" cy="14.500" r="13.200" fill="none" stroke="#4a3a3a" stroke-opacity="0.350" stroke-width="2"/><circle cx="14.500" cy="14.500" r="6" fill="#1d2430"/><path d="M12.500 17.500 C13 14 14.500 12 16.800 10.500" stroke="#f4f4f4" stroke-width="1.800" fill="none"/></svg>
<svg class="b" style="left:877px;top:856px" width="31" height="29" viewBox="0 0 31 29"><path d="M1 4 C1 2.500 2 1.500 3.500 1.500 H11 L14 4.500 H28 C29.500 4.500 30.500 5.500 30.500 7 V9 H1 Z" fill="#e9a825"/><rect x="1" y="6.500" width="29.500" height="21" rx="2" fill="#fbd45c"/><path d="M6 28 V21 C6 19.500 7 18.500 8.500 18.500 H22.500 C24 18.500 25 19.500 25 21 V28 Z" fill="#2f8fe5"/><rect x="10" y="22" width="11" height="2.300" rx="1" fill="#15549e"/></svg>
<div class="b" style="left:890px;top:890px;width:5px;height:3px;background:#8a8d93;border-radius:1.500px;"></div>
<svg class="b" style="left:932.5px;top:855px" width="30" height="30" viewBox="0 0 30 30"><circle cx="15" cy="15" r="14.500" fill="#fff"/><path d="M15 0.500 A14.500 14.500 0 0 1 27.560 7.750 L15 7.750 A7.250 7.250 0 0 0 8.720 11.380 L2.440 7.750 A14.500 14.500 0 0 1 15 0.500 Z" fill="#e33b2e"/><path d="M27.560 7.750 A14.500 14.500 0 0 1 15 29.500 L21.280 18.630 A7.250 7.250 0 0 0 21.280 11.380 L15 7.750 Z" fill="#fbc116"/><path d="M15 29.500 A14.500 14.500 0 0 1 2.440 7.750 L8.720 18.630 A7.250 7.250 0 0 0 15 22.250 L21.280 18.630 Z" fill="#2ba24c"/><circle cx="15" cy="15" r="6.800" fill="#fff"/><circle cx="15" cy="15" r="5.500" fill="#3b78e7"/></svg>
<svg class="b" style="left:948px;top:848px" width="21" height="21" viewBox="0 0 21 21"><circle cx="10.500" cy="10.500" r="9.800" fill="#dcdad9" stroke="#9a9a9a" stroke-width="0.800"/><path d="M2.500 16 C2 8 4 3.500 8 3 C11 3.500 11 8 10.500 11 C10.500 14 12 16.500 13 18.500 C9 21 5 19.500 2.500 16 Z" fill="#1e1a1b"/><ellipse cx="9.500" cy="9.500" rx="1.800" ry="3" fill="#a58a80"/></svg>
<div class="b" style="left:945px;top:890px;width:5px;height:3px;background:#8a8d93;border-radius:1.500px;"></div>
<svg class="b" style="left:987px;top:856px" width="31" height="28" viewBox="0 0 31 28"><rect x="9" y="0.500" width="21.500" height="27" rx="2" fill="#21a366"/><rect x="9" y="0.500" width="10.700" height="9" fill="#21a366"/><rect x="19.700" y="0.500" width="10.800" height="9" fill="#33c481"/><rect x="9" y="9.500" width="10.700" height="9" fill="#107c41"/><rect x="19.700" y="9.500" width="10.800" height="9" fill="#21a366"/><rect x="9" y="18.500" width="21.500" height="9" fill="#185c37"/><rect x="19.700" y="18.500" width="10.800" height="9" fill="#107c41"/><rect x="0.500" y="6" width="16" height="16" rx="1.500" fill="#107c41"/><path d="M5 9.500 L12 18.500 M12 9.500 L5 18.500" stroke="#fff" stroke-width="2.200"/></svg>
<div class="b" style="left:1000px;top:890px;width:5px;height:3px;background:#8a8d93;border-radius:1.500px;"></div>
<svg class="b" style="left:1043px;top:855px" width="29" height="29" viewBox="0 0 29 29"><rect x="0.500" y="0.500" width="28" height="28" rx="5" fill="#b30b00"/><path d="M6.500 21.500 C9 19.500 12 14 13.500 8.500 C14.200 6 15.800 6.500 15.500 9 C15 13 18 17.500 22.500 18.500 C24.500 19 23.500 20.500 21.500 20 C17 19 11 19.500 6.500 21.500 Z" fill="none" stroke="#fff" stroke-width="1.700" stroke-linejoin="round"/></svg>
<div class="b" style="left:1055px;top:890px;width:5px;height:3px;background:#8a8d93;border-radius:1.500px;"></div>
<svg class="b" style="left:1096px;top:856px" width="31" height="28" viewBox="0 0 31 28"><rect x="9" y="0.500" width="21.500" height="27" rx="2" fill="#41a5ee"/><rect x="9" y="7.300" width="21.500" height="6.800" fill="#2b7cd3"/><rect x="9" y="14.100" width="21.500" height="6.800" fill="#185abd"/><rect x="9" y="20.900" width="21.500" height="6.600" fill="#103f91"/><rect x="0.500" y="6" width="16" height="16" rx="1.500" fill="#185abd"/><path d="M4 9.500 L6.300 18.500 L8.500 11 L10.700 18.500 L13 9.500" fill="none" stroke="#fff" stroke-width="1.700" stroke-linejoin="round"/></svg>
<div class="b" style="left:1109px;top:890px;width:5px;height:3px;background:#8a8d93;border-radius:1.500px;"></div>
<div class="b" style="left:1144.5px;top:846px;width:47px;height:48px;background:#f3f3f4;border-radius:4px;border:1px solid #ececee;box-sizing:border-box;"></div>
<svg class="b" style="left:1153px;top:855px" width="30" height="30" viewBox="0 0 30 30"><rect x="0.500" y="0.500" width="29" height="29" rx="11" fill="#0b5cff"/><text x="15" y="17.300" text-anchor="middle" font-family="Liberation Sans" font-weight="700" font-size="7.500" fill="#fff">zoom</text></svg>
<div class="b" style="left:1158px;top:890px;width:20px;height:3px;background:#6e7280;border-radius:1.500px;"></div>
<svg class="b" style="left:1281px;top:865px" width="15" height="10" viewBox="0 0 15 10"><path d="M1.500 8 L7.500 2 L13.500 8" fill="none" stroke="#1d1d1d" stroke-width="1.600"/></svg>
<svg class="b" style="left:1314px;top:859px" width="30" height="22" viewBox="0 0 30 22" fill="none" stroke="#3c4a5c" stroke-width="1.200"><rect x="4.500" y="1" width="5" height="9" rx="2.500"/><path d="M2 7.500 C2 12 4 13.500 7 13.500 C10 13.500 12 12 12 7.500 M7 13.500 V16"/><path d="M14.500 13 L26.500 8 L21.500 20 L19.500 14.800 Z" stroke-linejoin="round"/></svg>
<svg class="b" style="left:1357px;top:862px" width="22" height="15" viewBox="0 0 22 15" fill="none" stroke="#1d1d1d" stroke-width="1.300"><rect x="1" y="1" width="20" height="13" rx="2.500"/><path d="M4.500 5 H5.500 M8 5 H9 M11.500 5 H12.500 M15 5 H16 M4.500 8 H5.500 M8 8 H9 M11.500 8 H12.500 M15 8 H16 M6.500 11 H15.500"/></svg>
<svg class="b" style="left:1396px;top:861px" width="22" height="17" viewBox="0 0 22 17" fill="none" stroke="#1d1d1d" stroke-width="1.500"><path d="M1.500 6 C7 0.500 15 0.500 20.500 6"/><path d="M4.800 9.500 C8.500 6 13.500 6 17.200 9.500"/><path d="M8 12.700 C10 11 12 11 14 12.700"/><circle cx="11" cy="15" r="1.100" fill="#1d1d1d" stroke="none"/></svg>
<svg class="b" style="left:1427px;top:861px" width="22" height="18" viewBox="0 0 22 18" fill="none" stroke="#1d1d1d" stroke-width="1.300"><path d="M1.500 6.500 H4.500 L9 2 V16 L4.500 11.500 H1.500 Z" stroke-linejoin="round"/><path d="M12 6 C13.500 7.500 13.500 10.500 12 12 M14.800 3.800 C17.500 6.500 17.500 11.500 14.800 14.200 M17.500 1.500 C21.500 5.500 21.500 12.500 17.500 16.500"/></svg>
<svg class="b" style="left:1457px;top:863px" width="24" height="14" viewBox="0 0 24 14"><rect x="1" y="1" width="19" height="12" rx="3" fill="none" stroke="#1d1d1d" stroke-width="1.400"/><rect x="3.300" y="3.300" width="11" height="7.400" rx="1.300" fill="#1d1d1d"/><rect x="21" y="4.500" width="2.300" height="5" rx="1" fill="#1d1d1d"/></svg>
<span class="t" style="left:1540.0px;top:851.5px;font-size:14.5px;line-height:17px;color:#1d1d1d;letter-spacing:0.04px;">10:23</span>
<span class="t" style="left:1499.5px;top:871.5px;font-size:14.5px;line-height:17px;color:#1d1d1d;letter-spacing:0.44px;">26/06/2025</span>
<span class="t" style="left:1225.0px;top:878.0px;font-size:11.5px;line-height:14px;color:rgba(255,255,255,0.400);letter-spacing:-0.23px;">© Copyright | Kantor Wilayah Kementerian Kalimantan Barat</span>
</body></html>
